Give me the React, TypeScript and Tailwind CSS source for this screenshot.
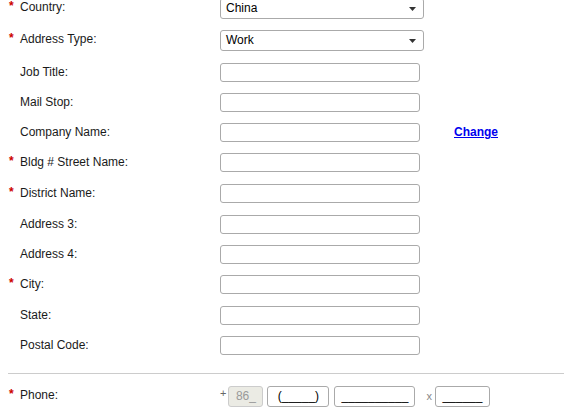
const font = { fontFamily: '"Liberation Sans", Arial, sans-serif' };

const Star = ({ on }: { on?: boolean }) => (
  <span className="w-[20px] shrink-0 pl-[9px] text-[12px] font-bold leading-[12px] text-[#cc0000]">
    {on ? "*" : ""}
  </span>
);

const Label = ({ text, req }: { text: string; req?: boolean }) => (
  <div className="flex w-[220px] shrink-0 pt-[8px]">
    <Star on={req} />
    <span className="text-[12px] leading-[15px] text-[#1a1a1a]">{text}</span>
  </div>
);

const SelectBox = ({ value }: { value: string }) => (
  <div className="mt-[6px] flex h-[21px] w-[204px] items-center justify-between rounded-[3px] border border-[#aaa] bg-white pl-[5px] pr-[7px]">
    <span className="text-[12px] leading-[15px] text-black">{value}</span>
    <svg width="7" height="4" viewBox="0 0 7 4">
      <path d="M0 0 L7 0 L3.5 4 Z" fill="#333" />
    </svg>
  </div>
);

const TextBox = () => (
  <div className="mt-[6px] h-[19px] w-[200px] rounded-[3px] border border-[#aaa] bg-white" />
);

const SelectRow = ({ label, value, h }: { label: string; value: string; h: string }) => (
  <div className={`flex items-start ${h}`}>
    <Label text={label} req />
    <SelectBox value={value} />
  </div>
);

const InputRow = ({
  label,
  req,
  tall,
  extra,
}: {
  label: string;
  req?: boolean;
  tall?: boolean;
  extra?: React.ReactNode;
}) => (
  <div className={`flex items-start ${tall ? "h-[31px]" : "h-[30px]"}`}>
    <Label text={label} req={req} />
    <TextBox />
    {extra}
  </div>
);

const PhoneBox = ({ w, text, disabled }: { w: string; text: string; disabled?: boolean }) => (
  <div
    className={`flex h-[21px] items-center justify-center rounded-[3px] border text-[12px] leading-[15px] ${w} ${
      disabled ? "border-[#ccc] bg-[#ebebe4] text-[#999]" : "border-[#aaa] bg-white text-black"
    }`}
  >
    {text}
  </div>
);

export default function App() {
  return (
    <div className="h-[418px] w-[564px] overflow-hidden bg-white" style={font}>
      <div className="mt-[-8px] flex flex-col">
        <SelectRow label="Country:" value="China" h="h-[32px]" />
        <SelectRow label="Address Type:" value="Work" h="h-[33px]" />
        <InputRow label="Job Title:" />
        <InputRow label="Mail Stop:" />
        <InputRow
          label="Company Name:"
          extra={
            <a className="ml-[34px] pt-[8px] text-[12px] font-bold leading-[15px] text-[#0000ee] underline">
              Change
            </a>
          }
        />
        <InputRow label="Bldg # Street Name:" req tall />
        <InputRow label="District Name:" req tall />
        <InputRow label="Address 3:" />
        <InputRow label="Address 4:" />
        <InputRow label="City:" req tall />
        <InputRow label="State:" />
        <InputRow label="Postal Code:" />
        <div className="ml-[8px] mt-[13px] h-px bg-[#cccccc]" />
        <div className="flex items-start pt-[12px]">
          <div className="flex w-[220px] shrink-0 pt-[2px]">
            <Star on />
            <span className="text-[12px] leading-[15px] text-[#1a1a1a]">Phone:</span>
          </div>
          <div className="flex items-start">
            <span className="mr-[2px] mt-[1px] text-[11px] leading-[12px] text-[#666]">+</span>
            <PhoneBox w="w-[35px]" text="86_" disabled />
            <div className="w-[4px]" />
            <PhoneBox w="w-[62px]" text="(_____)" />
            <div className="w-[5px]" />
            <PhoneBox w="w-[81px]" text="__________" />
            <span className="ml-[11px] mr-[3px] mt-[4px] text-[11px] leading-[12px] text-[#888]">x</span>
            <PhoneBox w="w-[55px]" text="______" />
          </div>
        </div>
      </div>
    </div>
  );
}
